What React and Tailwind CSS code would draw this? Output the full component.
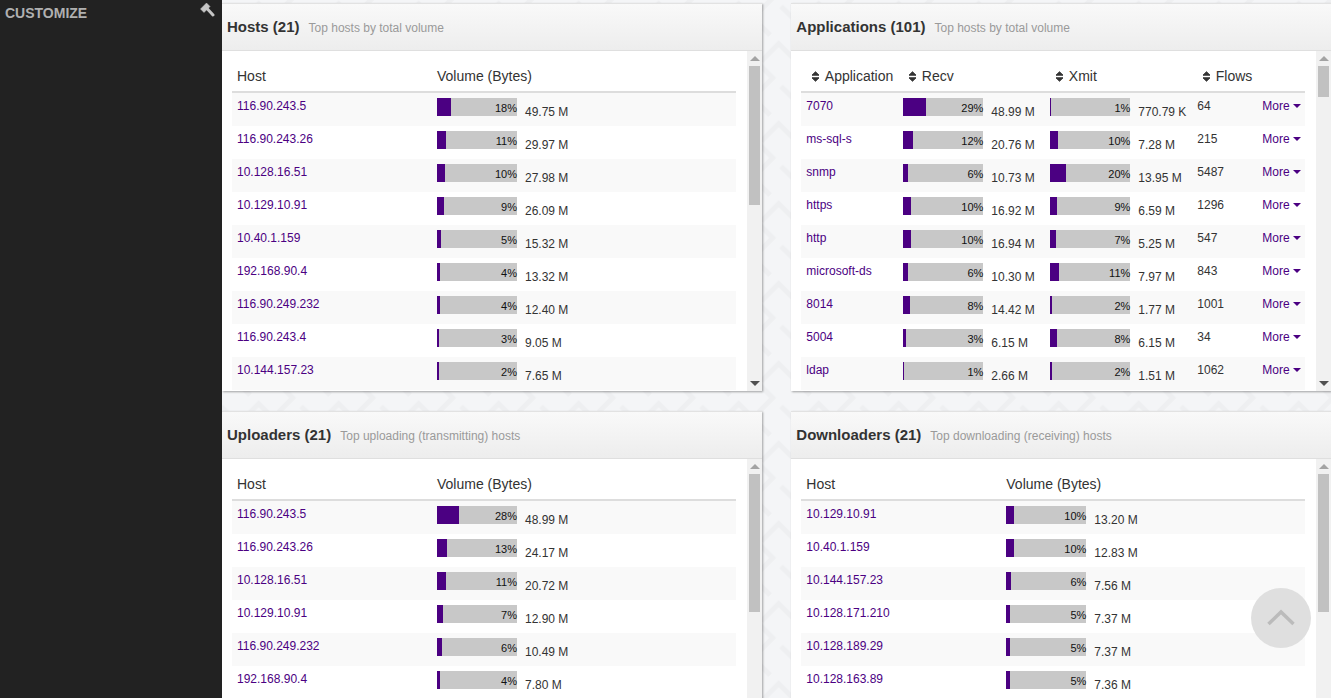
import React from "react";

const hosts = [
  ["116.90.243.5", 18, "49.75 M"], ["116.90.243.26", 11, "29.97 M"], ["10.128.16.51", 10, "27.98 M"],
  ["10.129.10.91", 9, "26.09 M"], ["10.40.1.159", 5, "15.32 M"], ["192.168.90.4", 4, "13.32 M"],
  ["116.90.249.232", 4, "12.40 M"], ["116.90.243.4", 3, "9.05 M"], ["10.144.157.23", 2, "7.65 M"],
];
const uploaders = [
  ["116.90.243.5", 28, "48.99 M"], ["116.90.243.26", 13, "24.17 M"], ["10.128.16.51", 11, "20.72 M"],
  ["10.129.10.91", 7, "12.90 M"], ["116.90.249.232", 6, "10.49 M"], ["192.168.90.4", 4, "7.80 M"],
];
const downloaders = [
  ["10.129.10.91", 10, "13.20 M"], ["10.40.1.159", 10, "12.83 M"], ["10.144.157.23", 6, "7.56 M"],
  ["10.128.171.210", 5, "7.37 M"], ["10.128.189.29", 5, "7.37 M"], ["10.128.163.89", 5, "7.36 M"],
];
const apps = [
  ["7070", 29, "48.99 M", 1, "770.79 K", "64"], ["ms-sql-s", 12, "20.76 M", 10, "7.28 M", "215"],
  ["snmp", 6, "10.73 M", 20, "13.95 M", "5487"], ["https", 10, "16.92 M", 9, "6.59 M", "1296"],
  ["http", 10, "16.94 M", 7, "5.25 M", "547"], ["microsoft-ds", 6, "10.30 M", 11, "7.97 M", "843"],
  ["8014", 8, "14.42 M", 2, "1.77 M", "1001"], ["5004", 3, "6.15 M", 8, "6.15 M", "34"],
  ["ldap", 1, "2.66 M", 2, "1.51 M", "1062"],
];

function Sort() {
  return (
    <svg width="9" height="11" viewBox="0 0 9 11" className="shrink-0" fill="#333" stroke="#333" strokeWidth="1" strokeLinejoin="round">
      <path d="M1 4.2 L8 4.2 L4.5 0.8 Z" />
      <path d="M1 6.8 L8 6.8 L4.5 10.2 Z" />
    </svg>
  );
}

function Bar({ pct, value }) {
  return (
    <div className="flex items-start">
      <div className="relative w-20 h-[18px] bg-[#c8c8c8] shrink-0">
        <div className="absolute left-0 top-0 h-full bg-[#4b0082]" style={{ width: `${pct}%` }} />
        <div className="relative text-right text-[11px] leading-[20px] text-[#111]">{pct}%</div>
      </div>
      <div className="ml-2 mt-[5px] leading-[18px] whitespace-nowrap">{value}</div>
    </div>
  );
}

function Scrollbar({ thumb }) {
  return (
    <div className="w-[15px] shrink-0 bg-[#f1f1f1] flex flex-col items-center">
      <div className="h-[15px] shrink-0 flex items-center justify-center">
        <span className="w-0 h-0 border-x-[5px] border-x-transparent border-b-[5px] border-b-[#a3a3a3]" />
      </div>
      <div className="flex-1 min-h-0 w-full px-[2px]">
        <div className="w-[11px] bg-[#c1c1c1]" style={{ height: thumb }} />
      </div>
      <div className="h-[15px] shrink-0 flex items-center justify-center">
        <span className="w-0 h-0 border-x-[5px] border-x-transparent border-t-[5px] border-t-[#505050]" />
      </div>
    </div>
  );
}

function Panel({ title, sub, thumb, children }) {
  return (
    <section className="h-[388px] flex flex-col bg-white border-t border-[#e2e2e2] shadow-[1px_1px_2px_rgba(0,0,0,0.35)]">
      <header className="h-[47px] shrink-0 flex items-center pl-[5px] pt-[1px] bg-gradient-to-b from-[#f9f9f9] to-[#ededed] border-b border-[#dfdfdf]">
        <span className="text-[15px] font-bold text-[#333]">{title}</span>
        <span className="ml-[9px] text-[12px] text-[#9a9a9a] mt-[1px]">{sub}</span>
      </header>
      <div className="flex-1 min-h-0 flex">
        <div className="flex-1 min-w-0 overflow-hidden pl-2.5 pr-[11px] text-[12px] text-[#333]">
          {children}
        </div>
        <Scrollbar thumb={thumb} />
      </div>
    </section>
  );
}

function HostTable({ rows }) {
  return (
    <div>
      <div className="grid grid-cols-[200px_304px] h-[42px] border-b-2 border-[#dddddd] text-[14px] items-center pt-[10px]">
        <div className="pl-[5px]">Host</div>
        <div className="pl-[5px]">Volume (Bytes)</div>
      </div>
      {rows.map((r, i) => (
        <div key={i} className={`grid grid-cols-[200px_304px] h-[33px] pt-[5px] ${i % 2 === 0 ? "bg-[#f9f9f9]" : "bg-white"}`}>
          <div className="pl-[5px] pt-[1px] leading-[14px] text-[#4b0082]">{r[0]}</div>
          <div className="pl-[5px]"><Bar pct={r[1]} value={r[2]} /></div>
        </div>
      ))}
    </div>
  );
}

function AppTable() {
  const cols = "grid grid-cols-[97px_147px_147px_65px_48px]";
  return (
    <div>
      <div className={`${cols} h-[42px] border-b-2 border-[#dddddd] text-[14px] items-center pt-[10px]`}>
        {["Application", "Recv", "Xmit", "Flows"].map((h) => (
          <div key={h} className="pl-[10px] flex items-center gap-[4.5px] whitespace-nowrap"><Sort />{h}</div>
        ))}
        <div />
      </div>
      {apps.map((r, i) => (
        <div key={i} className={`${cols} h-[33px] pt-[5px] ${i % 2 === 0 ? "bg-[#f9f9f9]" : "bg-white"}`}>
          <div className="pl-[5px] pt-[1px] leading-[14px] text-[#4b0082]">{r[0]}</div>
          <div className="pl-[5px]"><Bar pct={r[1]} value={r[2]} /></div>
          <div className="pl-[5px]"><Bar pct={r[3]} value={r[4]} /></div>
          <div className="pl-[5px] pt-[1px] leading-[14px]">{r[5]}</div>
          <div className="pl-[5px] pt-[1px] h-[15px] leading-[14px] text-[#4b0082] flex items-center whitespace-nowrap">
            More
            <span className="ml-[3px] w-0 h-0 border-x-[4px] border-x-transparent border-t-[4px] border-t-[#4b0082]" />
          </div>
        </div>
      ))}
    </div>
  );
}

function Pattern() {
  return (
    <svg className="absolute inset-0 w-full h-full" aria-hidden="true">
      <defs>
        <pattern id="fret" width="56.57" height="56.57" patternUnits="userSpaceOnUse" patternTransform="translate(8 4) rotate(45)">
          <g stroke="#eeeff1" strokeWidth="5" fill="none">
            <path d="M0 8 H40 V28" />
            <path d="M56.57 8 H52" />
            <path d="M20 56.57 V36 H56.57" />
            <path d="M20 0 V4" />
            <path d="M0 36 H8" />
          </g>
        </pattern>
      </defs>
      <rect width="100%" height="100%" fill="#f4f5f7" />
      <rect width="100%" height="100%" fill="url(#fret)" />
    </svg>
  );
}

export default function App() {
  return (
    <div className="flex h-screen overflow-hidden font-['Liberation_Sans',Arial,sans-serif]">
      <aside className="w-[222px] shrink-0 bg-[#222222] flex justify-between items-start pl-[5px] pr-[7px]">
        <span className="mt-[5px] text-[14px] leading-4 font-bold text-[#b0b0b0]">CUSTOMIZE</span>
        <svg width="16" height="16" viewBox="0 0 16 16" className="mt-[2px]" fill="#c5c5c5" stroke="#c5c5c5">
          <path d="M1.5 7 L7.5 1 L11 4.5 L5 10.5 Z" strokeWidth="0.5" strokeLinejoin="round" />
          <path d="M8 6.5 L14 13" strokeWidth="3" strokeLinecap="round" />
        </svg>
      </aside>
      <main className="relative flex-1 min-w-0 overflow-hidden">
        <Pattern />
        <div className="relative grid grid-cols-[540px_540px] gap-x-[29.3px] gap-y-5 pt-[3px]">
          <Panel title="Hosts (21)" sub="Top hosts by total volume" thumb={139}><HostTable rows={hosts} /></Panel>
          <Panel title="Applications (101)" sub="Top hosts by total volume" thumb={31}><AppTable /></Panel>
          <Panel title="Uploaders (21)" sub="Top uploading (transmitting) hosts" thumb={138}><HostTable rows={uploaders} /></Panel>
          <Panel title="Downloaders (21)" sub="Top downloading (receiving) hosts" thumb={138}><HostTable rows={downloaders} /></Panel>
        </div>
        <div className="absolute right-5 bottom-[50px] w-[60px] h-[60px] rounded-full bg-[#dcdcdc]/90 flex items-center justify-center">
          <svg width="30" height="20" viewBox="0 0 30 20" fill="none" stroke="#bbbbbb" strokeWidth="3.5">
            <path d="M2.5 16 L15 4 L27.5 16" />
          </svg>
        </div>
      </main>
    </div>
  );
}
